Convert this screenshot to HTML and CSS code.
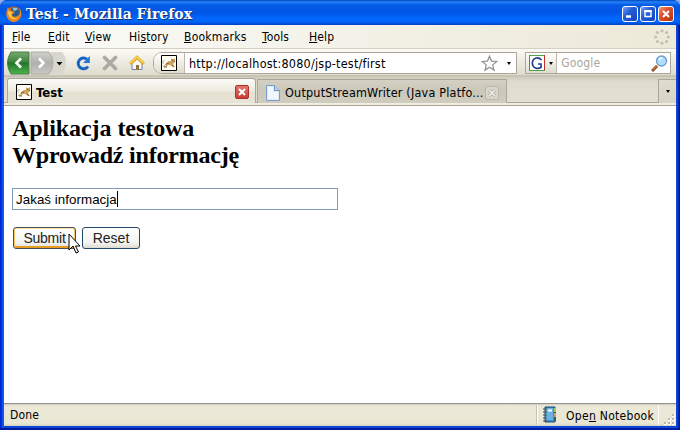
FILE: index.html
```html
<!DOCTYPE html>
<html lang="pl">
<head>
<meta charset="utf-8">
<title>Test</title>
<link rel="stylesheet" href="styles.css">
</head>
<body>
<svg class="defs" width="0" height="0">
  <defs>
    <symbol id="cat" viewBox="0 0 16 16">
      <path d="M.5.5h15v15H.5z" fill="#fffdf3" stroke="#000"/>
      <path d="M4 6c-3-1-3 2-1 3M2 12l3-3" fill="none" stroke="#b5b2a8"/>
      <path d="M5 8l3-2 2 0V3l1 1h2l1-1v4l-2 2 2 3h-2l-3-2-2 0-2 2H3l2-2z" fill="#cda25b"/>
      <path d="M5 9l3-1M3 12h3M11 10l2 2" fill="none" stroke="#806848"/>
      <path d="M11 5.500h1M13 6.500h1" stroke="#70542d"/>
    </symbol>
  </defs>
</svg>
<div class="window">
  <header class="title">
    <svg class="fox" viewBox="0 0 16 16"><circle cx="8" cy="8" r="7.5" fill="#db650d"/><circle cx="8.7" cy="6.5" r="5" fill="#285b91"/><path d="M7 2q3-1 5 1L9 5 7 4z" fill="#8bc4e4"/><path d="M1 4l1-3 2 3 3 1 2 2-3 1c0 3 4 4 7 1 2-3 1-5 0-7 5 5 1 14-5 14C2 16-1 9 1 4z" fill="#ed851c"/><path d="M2 5l3 1 2 1-2 1c0 4 4 5 7 3-4 5-10 1-10-6z" fill="#ffcb4d"/></svg>
    <h1>Test - Mozilla Firefox</h1>
    <div class="controls">
      <span class="control"><svg viewBox="0 0 14 14"><path d="M3 9.5h5" stroke="#fff" stroke-width="2.4"/></svg></span>
      <span class="control"><svg viewBox="0 0 14 14"><path d="M4 4.5h6v5H4z" fill="none" stroke="#fff" stroke-width="1.4"/><path d="M3.3 4h7.4" stroke="#fff" stroke-width="2"/></svg></span>
      <span class="control close"><svg viewBox="0 0 14 14"><path d="M4 4l6 6m0-6l-6 6" stroke="#fff" stroke-width="2.1"/></svg></span>
    </div>
  </header>
  <nav class="menu">
    <span class="m-file"><u>F</u>ile</span><span class="m-edit"><u>E</u>dit</span><span class="m-view"><u>V</u>iew</span><span class="m-history">Hi<u>s</u>tory</span><span class="m-bookmarks"><u>B</u>ookmarks</span><span class="m-tools"><u>T</u>ools</span><span class="m-help"><u>H</u>elp</span>
    <svg class="throbber" viewBox="0 0 16 16"><g fill="#c4c1b4"><circle cx="8" cy="1.8" r="1.6"/><circle cx="12.6" cy="3.5" r="1.6"/><circle cx="14.3" cy="8" r="1.6"/><circle cx="12.6" cy="12.5" r="1.6"/><circle cx="8" cy="14.2" r="1.6"/><circle cx="3.4" cy="12.5" r="1.6"/><circle cx="1.7" cy="8" r="1.6"/><circle cx="3.4" cy="3.5" r="1.6"/></g></svg>
  </nav>
  <div class="toolbar">
    <svg class="travel" viewBox="0 0 60 24">
      <defs>
        <linearGradient id="green" x1="0" y1="0" x2="0" y2="1"><stop offset="0" stop-color="#78a875"/><stop offset=".45" stop-color="#3b853b"/><stop offset=".5" stop-color="#24742a"/><stop offset="1" stop-color="#4db54b"/></linearGradient>
        <linearGradient id="grey" x1="0" y1="0" x2="0" y2="1"><stop offset="0" stop-color="#d1d1cc"/><stop offset=".5" stop-color="#b0b0ac"/><stop offset="1" stop-color="#cacac5"/></linearGradient>
      </defs>
      <path d="M44 1h11q4 4 4 11t-4 11H44z" fill="#d8d7ce"/>
      <path d="M4 1h18v22H4Q.5 18 .5 12T4 1z" fill="url(#green)" stroke="#477d47"/>
      <path d="M24 1h18q4 5 4 11t-4 11H24z" fill="url(#grey)" stroke="#aaa9a3"/>
      <path d="M14 7.500L9.500 12l4.500 4.500M32 7.500l4.500 4.500-4.500 4.500" fill="none" stroke="#fff" stroke-width="2.600"/>
      <path d="M49.500 11h6l-3 3.500z" fill="#000"/>
    </svg>
    <svg class="reload" viewBox="0 0 16 16"><path d="M13 11.500A5.400 5.400 0 1 1 12 4.200" fill="none" stroke="#1764c4" stroke-width="3"/><path d="M14.800 1v7H8z" fill="#2274d3"/></svg>
    <svg class="stop" viewBox="0 0 16 16"><path d="M2.500 2.500l11 11m0-11l-11 11" stroke="#a9a9a5" stroke-width="3.600" stroke-linecap="round"/></svg>
    <svg class="home" viewBox="0 0 16 16"><path d="M3 7.500L8 3l5 4.500V14.500H3z" fill="#f6f8fc" stroke="#7186aa"/><path d="M7 10h3v4.500H7z" fill="#9b6c3c"/><path d="M1.200 8.800L8 2.300l6.800 6.500" fill="none" stroke="#d99b18" stroke-width="3"/><path d="M1.500 8.300L8 2l6.500 6.300" fill="none" stroke="#ffd755" stroke-width="1.500"/></svg>
    <div class="address">
      <span class="site"><svg viewBox="0 0 16 16"><use href="#cat"/></svg></span>
      <span class="url">http://localhost:8080/jsp-test/first</span>
      <svg class="star" viewBox="0 0 17 17"><path d="M8.500 1.200l2 4.900 5.300.4-4.100 3.400 1.300 5.200-4.500-2.800L4 15.100l1.300-5.200-4.100-3.400 5.300-.4z" fill="#fff" stroke="#8f8f8f" stroke-width="1.200"/></svg>
      <i class="arrow"></i>
    </div>
    <div class="search">
      <span class="engine"><svg class="google" viewBox="0 0 16 16"><path d="M0 0h16v16H0z" fill="#fff"/><path d="M0 .5h16" stroke="#4ba54b"/><path d="M.5 0v16" stroke="#5574b9"/><path d="M15.500 0v16" stroke="#c0302b"/><path d="M0 15.500h16" stroke="#4ba54b"/><path d="M12.500 5Q10 2.300 7.200 3 3.500 4 3.300 8.300C3.500 13 8.500 14.500 12 12.500V9H9" fill="none" stroke="#203f92" stroke-width="1.600"/></svg><i class="arrow"></i></span>
      <span class="query">Google</span>
      <svg class="glass" viewBox="0 0 17 17"><path d="M6 11l-5 5" stroke="#864824" stroke-width="3"/><path d="M6 10.500l-4.500 4.500" stroke="#c8793e" stroke-width="1.500"/><circle cx="10.500" cy="6" r="5" fill="#b4ddfa" stroke="#719dcc" stroke-width="1.400"/><path d="M8 5q1-2 3-2" stroke="#fff" stroke-width="1.500" fill="none"/></svg>
    </div>
  </div>
  <div class="tabs">
    <div class="tab active"><svg class="tab-icon" viewBox="0 0 16 16"><use href="#cat"/></svg><b>Test</b><span class="tab-close red"><svg viewBox="0 0 12 12"><path d="M3 3l6 6m0-6L3 9" stroke="#fff" stroke-width="2"/></svg></span></div>
    <div class="tab inactive"><svg class="doc" viewBox="0 0 14 16"><path d="M.5.500h8l5 5v10H.5z" fill="#dcebfb" stroke="#7d9dca"/><path d="M2 2h5v5h5v7H2z" fill="#f3f8ff"/><path d="M8.500.500v5h5" fill="#b9d1f1" stroke="#6e93c8"/></svg><span class="tab-name">OutputStreamWriter (Java Platfo...</span><span class="tab-close"><svg viewBox="0 0 12 12"><path d="M3 3l6 6m0-6L3 9" stroke="#aaa99d" stroke-width="3"/><path d="M3 3l6 6m0-6L3 9" stroke="#f4f3eb" stroke-width="1.500"/></svg></span></div>
    <div class="list"><i class="arrow"></i></div>
  </div>
  <main>
    <h2><span class="line-one">Aplikacja testowa</span><br><span class="line-two">Wprowadź informację</span></h2>
    <div class="field"><span>Jakaś informacja</span><i></i></div>
    <div class="buttons"><button class="submit">Submit</button><button>Reset</button>
      <svg class="pointer" viewBox="0 0 13 21"><path d="M1 1v16l4-4 3 7 2.500-1-3-6H12z" fill="#fff" stroke="#000"/></svg>
    </div>
  </main>
  <footer><span class="done">Done</span><div class="notebook"><svg viewBox="0 0 16 17"><path d="M3 1h10v15H3z" fill="#438bc2" stroke="#174b72"/><path d="M4 2h7v12H4z" fill="#68b2e5"/><path d="M12 2h2v13h-2z" fill="#315d67"/><path d="M12 2h2v4h-2z" fill="#9dcc5d"/><path d="M12 7h2v4h-2z" fill="#d49b72"/><path d="M6 4.500h4" stroke="#fff" stroke-width="2"/><path d="M1 3h4M1 6h4M1 9h4M1 12h4M1 15h4" stroke="#3e4c55" stroke-dasharray="2 1"/></svg><span class="note-name">Ope<u>n</u> Notebook</span></div><svg class="grip" viewBox="0 0 12 12"><path d="M8 1h3v3H8zM4 5h3v3H4zM8 5h3v3H8zM0 9h3v3H0zM4 9h3v3H4zM8 9h3v3H8z" fill="#fff"/><path d="M8 1h2v2H8zM4 5h2v2H4zM8 5h2v2H8zM0 9h2v2H0zM4 9h2v2H4zM8 9h2v2H8z" fill="#bbb7a4"/></svg></footer>
</div>
</body>
</html>
```
FILE: styles.css
```css
* { box-sizing: border-box; }
body { margin: 0; width: 680px; height: 430px; overflow: hidden; background: #8fabe8; color: #000; font: 12px "DejaVu Sans Condensed", "DejaVu Sans", sans-serif; font-stretch: condensed; white-space: nowrap; }
svg { display: block; flex: none; }
.defs { position: absolute; }
.window { width: 680px; height: 430px; padding: 0 4px 4px; border-radius: 7px 7px 0 0; background: linear-gradient(90deg, #001ed5 0, #003de0 2px, #196cef 3px, #0846d8 4px, #0846d8 676px, #1648dc 677px, #001b9f 679px); box-shadow: inset 0 -2px #001a9f; display: flex; flex-direction: column; overflow: hidden; }
.title { height: 25px; margin: 0 -4px; padding: 3px 6px 0; display: flex; align-items: center; background: linear-gradient(#0047ba, #2582f9 2px, #055be5 5px, #0055e5 12px, #0068ff 19px, #0062f5 22px, #003fc5); }
.fox { width: 16px; height: 16px; }
h1 { margin: 0 auto 0 4px; color: #fff; font: bold 14px/20px "DejaVu Serif", serif; font-stretch: normal; text-shadow: 1px 1px #153575; letter-spacing: .02px; }
.controls { display: flex; gap: 2px; }
.control { width: 16px; height: 16px; border: 1px solid #fff; border-radius: 3px; background: linear-gradient(135deg, #799ff3, #235dd9 40%, #1745ba); }
.control.close { background: linear-gradient(135deg, #ee9b80, #d9512b 40%, #b83211); }
.control svg { width: 14px; height: 14px; }
.menu { height: 24px; padding: 1px 6px 0 8px; display: flex; align-items: center; background: linear-gradient(90deg, #fbfbf9, #ece9d8); border-bottom: 1px solid #d3d0c4; }
.menu > span { margin-right: 16px; flex: none; letter-spacing: .15px; }
.m-file { width: 20px; } .m-edit { width: 21px; } .m-view { width: 28px; } .m-history { width: 39px; } .menu > .m-bookmarks { width: 62px; letter-spacing: .25px; } .m-tools { width: 31px; } .m-help { width: 26px; }
u { text-decoration: underline 1px; text-underline-offset: 1px; text-decoration-skip-ink: none; }
.throbber { width: 16px; height: 16px; margin-left: auto; }
.toolbar { height: 28px; padding: 2px 5px 0 3px; display: flex; align-items: center; background: linear-gradient(#fbfaf5, #efeee5 40%, #dfdccd); border-bottom: 2px solid #c7c4b6; }
.travel { width: 60px; height: 24px; }
.reload { width: 16px; height: 16px; margin-left: 8px; }
.stop { width: 16px; height: 16px; margin-left: 11px; }
.home { width: 16px; height: 16px; margin-left: 11px; }
.address { width: 365px; height: 22px; margin-left: 8px; display: flex; align-items: center; background: #fff; border: 1px solid #aaa79a; border-radius: 9px 0 0 9px; overflow: hidden; }
.site { width: 31px; height: 20px; display: flex; align-items: center; justify-content: center; background: linear-gradient(#fff, #dfdccd); border-right: 1px solid #bbb8ab; }
.site svg { width: 16px; height: 16px; }
.url { margin-left: 4px; font-size: 12.500px; letter-spacing: .22px; }
.star { width: 17px; height: 17px; margin-left: auto; }
.arrow { width: 0; height: 0; border: solid transparent; border-width: 3px 2.500px 0; border-top-color: #000; }
.address .arrow { margin: 0 5px 0 9px; }
.search { width: 146px; height: 22px; margin-left: 8px; display: flex; align-items: center; background: #fff; border: 1px solid #aaa79a; }
.engine { width: 31px; height: 20px; display: flex; align-items: center; padding-left: 3px; gap: 4px; background: linear-gradient(#fff, #dfdccd); border-right: 1px solid #bbb8ab; }
.google { width: 16px; height: 16px; }
.query { margin-left: 4px; color: #aaa69b; letter-spacing: .15px; }
.glass { width: 17px; height: 17px; margin: 0 2px 0 auto; }
.tabs { height: 29px; display: flex; align-items: flex-end; padding: 0 0 3px 3px; background: linear-gradient(#cfccbd, #dfdccd 5px, #e3e0d1 25px, #a9a697 25px, #a9a697 26px, #f0eee4 26px, #f0eee4 28px, #a9a090 28px); }
.tab { height: 24px; display: flex; align-items: center; }
.active { width: 249px; height: 25px; padding: 2px 6px 0 8px; border: 1px solid #aaa79a; border-bottom: 0; border-radius: 3px 3px 0 0; background: linear-gradient(#fafaf7, #edebdf 50%, #e5e2d4 55%, #e7e4d7); }
.tab-icon { width: 16px; height: 16px; }
.tab b { margin-left: 4px; font-size: 13px; }
.tab-close { width: 14px; height: 14px; margin-left: auto; border: 1px solid #bbb9ad; border-radius: 2px; background: #d8d5c9; }
.tab-close.red { border-color: #b32c25; background: linear-gradient(#dd7770, #c53d35); }
.tab-close svg { width: 12px; height: 12px; }
.inactive { width: 250px; margin-left: 1px; padding: 2px 7px 0 8px; border: 1px solid #aaa79a; border-width: 1px 1px 0 1px; background: linear-gradient(#d4d1c4, #cbc8ba 45%, #d0cdbf); }
.doc { width: 14px; height: 16px; }
.tab-name { margin-left: 5px; font-size: 12.500px; letter-spacing: .2px; }
.list { width: 18px; height: 24px; margin-left: auto; display: flex; align-items: center; justify-content: center; border: solid #aaa79a; border-width: 1px 0 0 1px; background: linear-gradient(#dfdccd, #d8d5c6); }
main { height: 297px; padding: 9px 8px; background: #fff; font-family: "Liberation Sans", Arial, sans-serif; }
h2 { margin: 0; font: bold 24px/27px "Liberation Serif", serif; }
.line-one { letter-spacing: -.06px; }
.line-two { letter-spacing: -.2px; }
.field { width: 326px; height: 22px; margin-top: 19px; padding-left: 3px; border: 1px solid #7f9db9; display: flex; align-items: center; font-size: 13.330px; letter-spacing: .05px; }
.field i { width: 1px; height: 16px; background: #000; }
.buttons { display: flex; gap: 6px; margin: 17px 0 0 1px; position: relative; }
button { width: 58px; height: 22px; padding: 0; border: 1px solid #24476e; border-radius: 3px; background: linear-gradient(#fff, #f3f3ef 75%, #dcdad0); font: 14px "Liberation Sans", Arial, sans-serif; color: #222; }
.submit { width: 63px; border-color: #46515c; letter-spacing: -.25px; box-shadow: inset 1px 0 #f7c567, inset -1px 0 #f7c567, inset 0 1px #ffdf9a, inset 0 -2px #e69c24; }
.pointer { position: absolute; left: 55px; top: 6px; width: 13px; height: 21px; }
footer { height: 23px; display: flex; align-items: center; background: linear-gradient(#96938a 1px, #cfccc0 1px, #ece9d8 3px, #e9e6d4 20px, #d8d4bd); }
.done { margin-left: 6px; letter-spacing: .15px; }
.notebook { height: 20px; margin-left: auto; padding-left: 4px; display: flex; align-items: center; width: 122px; border: solid #fff; border-width: 0 1px; box-shadow: -1px 0 #c5c2b5; }
.notebook svg { width: 16px; height: 17px; }
.note-name { margin-left: 8px; padding-top: 2px; letter-spacing: .3px; }
.grip { width: 12px; height: 12px; margin: 8px 0 0 5px; }
```
